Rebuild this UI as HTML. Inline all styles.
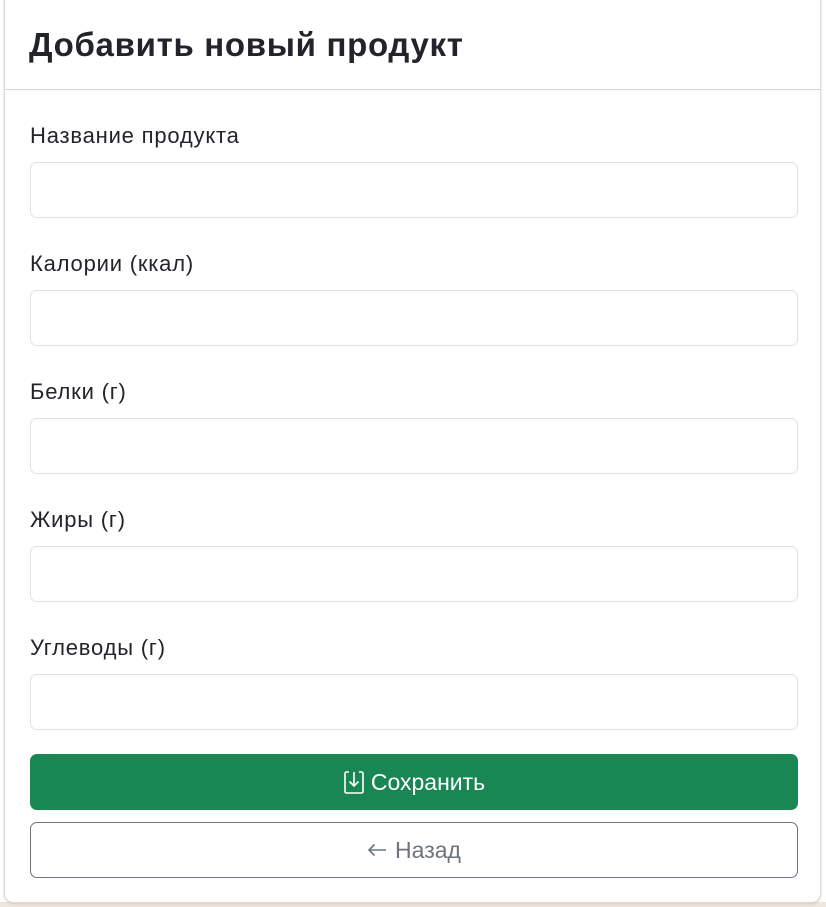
<!DOCTYPE html>
<html><head><meta charset="utf-8"><style>
html,body{margin:0;padding:0}
body{width:826px;height:907px;background:#fff;font-family:"Liberation Sans","DejaVu Sans",sans-serif;color:#212529;overflow:hidden;position:relative}
.strip{position:absolute;left:0;right:0;top:902px;height:5px;background:#f1e6dc}
.card{position:absolute;left:4px;top:-8px;width:817px;height:911px;background:#fff;border:1px solid #d8d8d8;border-radius:9px;box-sizing:border-box;box-shadow:0 1px 3px rgba(0,0,0,.12)}
.hdr{position:absolute;left:0;right:0;top:0;height:96px;border-bottom:1px solid #d6d6d6}
h1{position:absolute;left:24px;top:33px;margin:0;font-size:33px;font-weight:bold;letter-spacing:0.7px}
.lbl{position:absolute;left:25px;font-size:22px;letter-spacing:0.8px}
.inp{position:absolute;left:25px;width:768px;height:56px;border:1px solid #dee2e6;border-radius:7px;box-sizing:border-box}
.btn{position:absolute;left:25px;width:768px;height:56px;border-radius:7px;box-sizing:border-box;display:flex;align-items:center;justify-content:center;font-size:23px}
.save{background:#198754;color:#fff;top:761px}
.back{border:1px solid #6c757d;color:#6c757d;top:829px}
</style></head><body>
<div class="strip"></div>
<div class="card">
<div class="hdr"><h1>Добавить новый продукт</h1></div>
<div class="lbl" style="top:130px">Название продукта</div>
<div class="inp" style="top:169px"></div>
<div class="lbl" style="top:258px">Калории (ккал)</div>
<div class="inp" style="top:297px"></div>
<div class="lbl" style="top:386px">Белки (г)</div>
<div class="inp" style="top:425px"></div>
<div class="lbl" style="top:514px">Жиры (г)</div>
<div class="inp" style="top:553px"></div>
<div class="lbl" style="top:642px">Углеводы (г)</div>
<div class="inp" style="top:681px"></div>
<div class="btn save"><svg width="22" height="26" viewBox="0 0 22 26" style="margin-right:6px"><path d="M6 3H3.5a1.5 1.5 0 0 0-1.5 1.5v18A1.5 1.5 0 0 0 3.5 24h15a1.5 1.5 0 0 0 1.5-1.5v-18A1.5 1.5 0 0 0 18.5 3H16" fill="none" stroke="#fff" stroke-width="1.6"/><path d="M11 3v14M6.5 12.5 11 17l4.5-4.5" fill="none" stroke="#fff" stroke-width="1.6"/></svg>Сохранить</div>
<div class="btn back"><svg width="20" height="14" viewBox="0 0 20 14" style="margin-right:8px"><path d="M19 7H2M7.5 1.5 2 7l5.5 5.5" fill="none" stroke="#6c757d" stroke-width="1.6"/></svg>Назад</div>
</div>
</body></html>
